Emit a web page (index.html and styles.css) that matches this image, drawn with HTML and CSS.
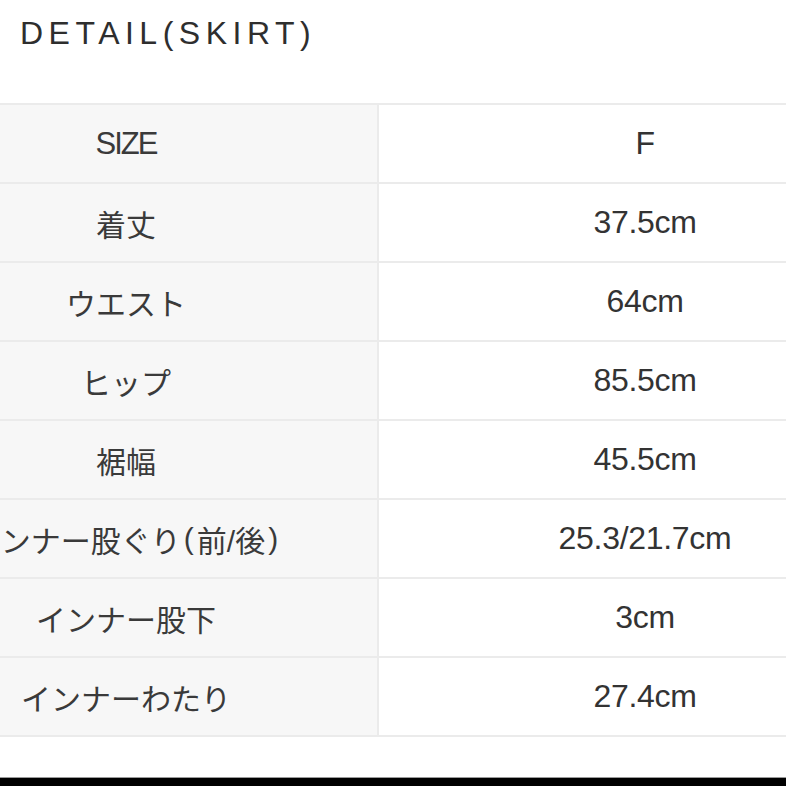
FILE: index.html
```html
<!DOCTYPE html>
<html lang="ja">
<head>
<meta charset="utf-8">
<link rel="stylesheet" href="styles.css">
</head>
<body>
<div class="page">
  <h1 class="title">DETAIL(SKIRT)</h1>
  <div class="table">
    <div class="row"><div class="label latin">SIZE</div><div class="value">F</div></div>
    <div class="row"><div class="label">着丈</div><div class="value">37.5cm</div></div>
    <div class="row"><div class="label">ウエスト</div><div class="value">64cm</div></div>
    <div class="row"><div class="label">ヒップ</div><div class="value">85.5cm</div></div>
    <div class="row"><div class="label">裾幅</div><div class="value">45.5cm</div></div>
    <div class="row"><div class="label">インナー股ぐり<span class="paren">(</span>前/後<span class="paren">)</span></div><div class="value">25.3/21.7cm</div></div>
    <div class="row"><div class="label">インナー股下</div><div class="value">3cm</div></div>
    <div class="row"><div class="label">インナーわたり</div><div class="value">27.4cm</div></div>
  </div>
  <div class="spacer"></div>
  <div class="bar"></div>
</div>
</body>
</html>
```

FILE: styles.css
```css
html, body {
  margin: 0;
  padding: 0;
  background: #ffffff;
  overflow: hidden;
}
.page {
  width: 786px;
  height: 786px;
  display: flex;
  flex-direction: column;
  overflow: hidden;
  font-family: "Liberation Sans", "Noto Sans CJK JP", sans-serif;
  color: #333333;
}
.title {
  margin: 0;
  padding: 13px 0 0 20px;
  height: 103px;
  flex-shrink: 0;
  box-sizing: border-box;
  font-family: "Liberation Sans", "Noto Sans CJK JP", sans-serif;
  font-weight: 400;
  font-size: 32px;
  letter-spacing: 5.5px;
  color: #2e2e2e;
  line-height: 40px;
}
.table {
  margin-left: -125px;
  width: 1036px;
  border-top: 2px solid #ebebeb;
}
.row {
  display: grid;
  grid-template-columns: 504px 532px;
  height: 79px;
  border-bottom: 2px solid #ebebeb;
  box-sizing: border-box;
}
.label, .value {
  display: flex;
  align-items: center;
  justify-content: center;
  white-space: nowrap;
}
.label {
  font-size: 30px;
  color: #3a3a3a;
  background: #f7f7f7;
  border-right: 2px solid #ebebeb;
}
.label.latin {
  font-size: 31px;
  letter-spacing: -2px;
}
.paren {
  padding: 0 3px;
}
.value {
  font-size: 32px;
  background: #ffffff;
  letter-spacing: -0.3px;
}
.spacer {
  flex: 1;
}
.bar {
  height: 8px;
  background: #000000;
  border-top: 1px solid #9a9a9a;
}
```
